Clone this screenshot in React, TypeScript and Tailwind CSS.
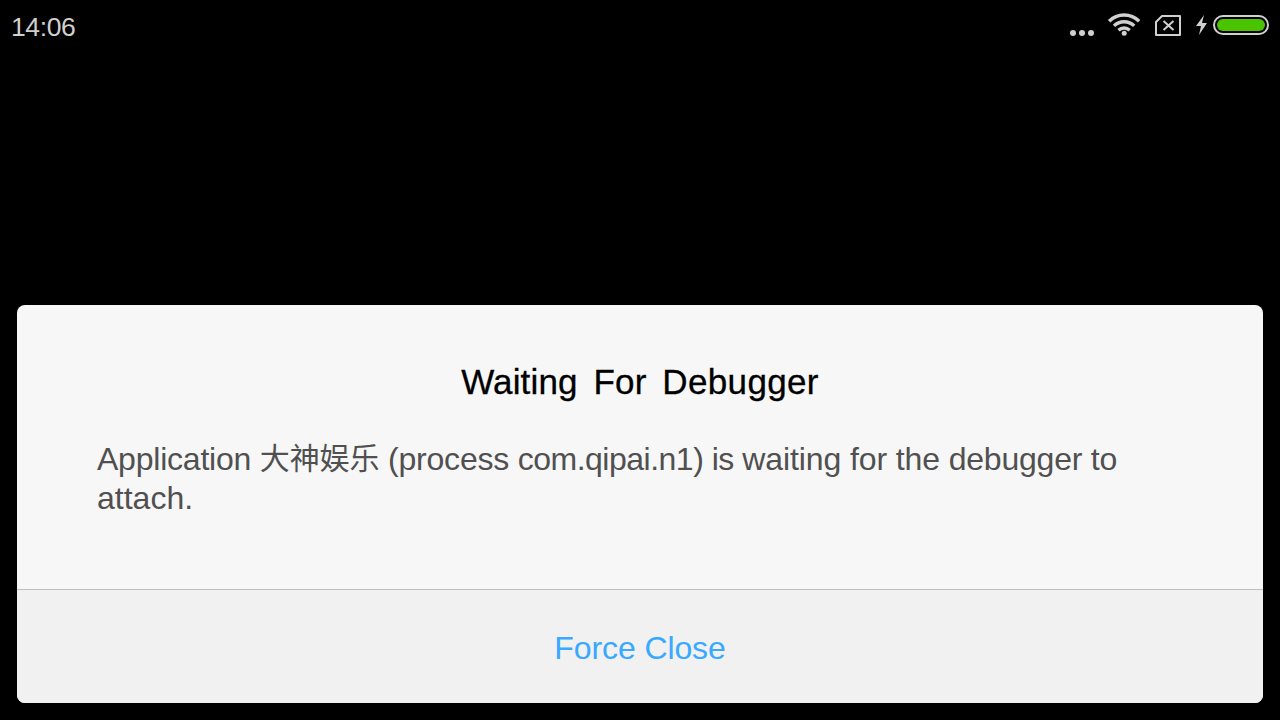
function WifiIcon() {
  return (
    <svg className="ml-[13px] mt-3 h-6 w-[34px]" viewBox="0 0 34 24" fill="none" stroke="#d0d0d0" strokeWidth="3.4">
      <path d="M2.1 9.2a21.2 21.2 0 0 1 30 0" />
      <path d="M7 13.9a14.4 14.4 0 0 1 20.2 0" />
      <path d="M11.5 18.2a8.2 8.2 0 0 1 11.2 0" />
      <circle cx="17.2" cy="21.2" r="2.5" fill="#d0d0d0" stroke="none" />
    </svg>
  );
}

function StatusBar() {
  return (
    <header className="flex h-[50px] items-start justify-between pl-[11px] pr-[11px] text-[#d0d0d0]">
      <time className="pt-[11px] text-[26.5px] leading-8 tracking-[-0.4px]">14:06</time>
      <div className="flex items-start">
        <div className="mt-[30px] flex gap-[3px]">
          <i className="size-1.5 rounded-full bg-[#d0d0d0]" />
          <i className="size-1.5 rounded-full bg-[#d0d0d0]" />
          <i className="size-1.5 rounded-full bg-[#d0d0d0]" />
        </div>
        <WifiIcon />
        <svg className="ml-3.5 mt-[15px] h-[21px] w-[26px]" viewBox="0 0 26 21" fill="none" stroke="#d0d0d0" strokeWidth="2">
          <path d="M7 1h18v19H1V7z" strokeLinejoin="round" />
          <path d="M8.5 6l10 9M18.5 6l-10 9" />
        </svg>
        <svg className="ml-[15px] mt-[15px] h-5 w-3" viewBox="0 0 12 20" fill="#d0d0d0">
          <path d="M8 0L0 11h5L3 20l8-12H6z" />
        </svg>
        <div className="ml-[5px] mt-[15px] h-5 w-14 rounded-full border-2 border-[#d0d0d0] p-0.5">
          <div className="h-full rounded-full bg-[#4ac400]" />
        </div>
      </div>
    </header>
  );
}

export default function App() {
  return (
    <main className="flex h-[720px] w-[1280px] flex-col justify-between overflow-hidden bg-black font-['Liberation_Sans','Noto_Sans_CJK_SC',sans-serif]">
      <StatusBar />
      <section className="mx-[17px] mb-[17px] flex h-[398px] flex-col overflow-hidden rounded-lg bg-[#f7f7f7]">
        <div className="h-[284px] px-20 pt-[57px]">
          <h1 className="text-center text-[35px] leading-10 tracking-[0.15px] text-black [-webkit-text-stroke:0.3px_#000] [word-spacing:6px]">
            Waiting For <span className="tracking-[0.35px]">Debugger</span>
          </h1>
          <p className="mt-[38px] whitespace-nowrap text-[32px] leading-[39px] tracking-[-0.22px] text-[#505050]">
            Application <span className="relative -top-px text-[30px] tracking-[-0.1px]">大神娱乐</span> (process{" "}
            <span className="tracking-[-0.5px]">com.qipai.n1) is </span>
            <span className="tracking-[-0.1px]">waiting for the </span>debugger to
            <br />
            <span className="tracking-normal">attach.</span>
          </p>
        </div>
        <button className="h-[114px] border-t border-[#c0c0c0] bg-[#f1f1f1] pt-0.5 text-[32px] tracking-[-0.1px] text-[#38a9ff]">
          Force Close
        </button>
      </section>
    </main>
  );
}
